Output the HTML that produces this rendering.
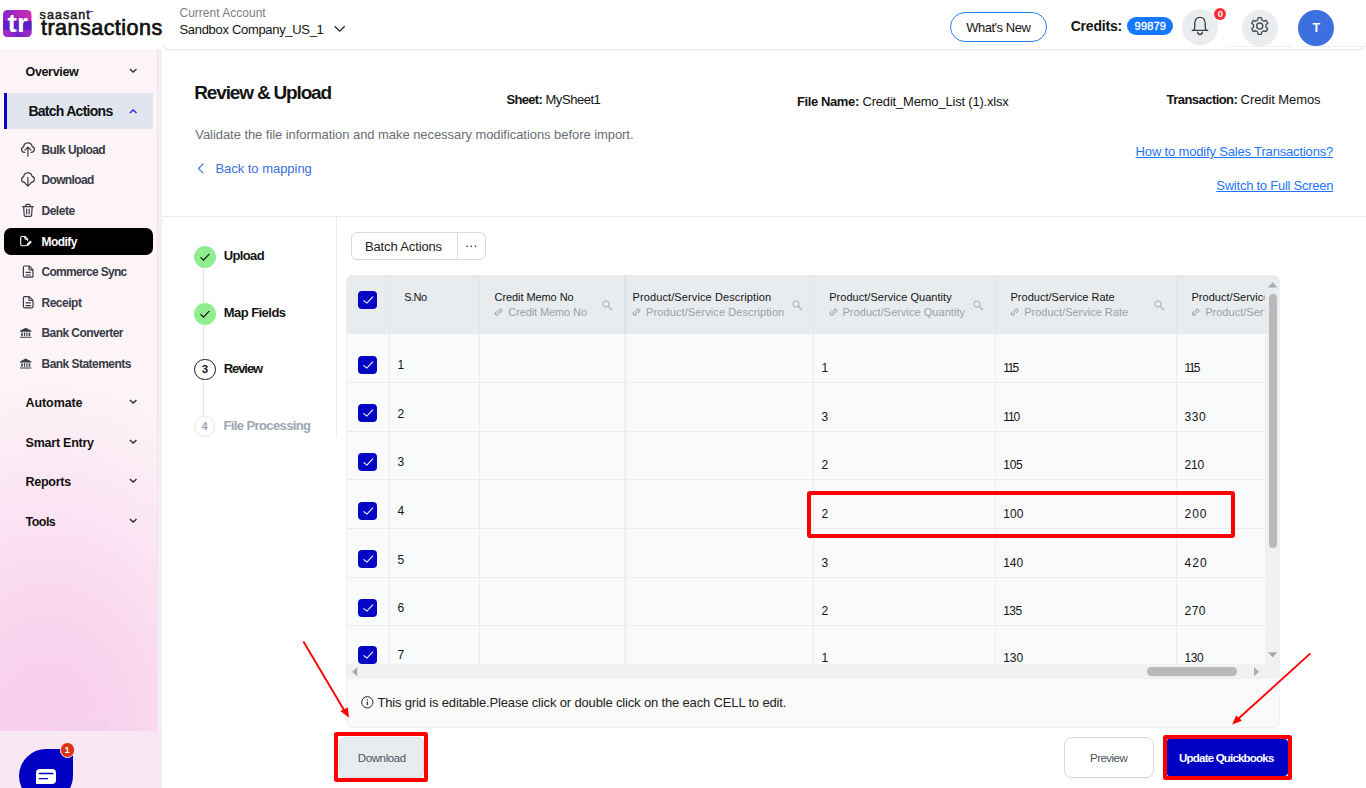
<!DOCTYPE html>
<html lang="en">
<head>
<meta charset="utf-8">
<title>Review &amp; Upload</title>
<style>
*{box-sizing:border-box;margin:0;padding:0}
html,body{width:1366px;height:788px;overflow:hidden;background:#fff;font-family:"Liberation Sans",sans-serif;color:#141414}
.abs{position:absolute}
.t{position:absolute;white-space:nowrap;line-height:1}
#side{position:absolute;left:0;top:49px;width:157px;height:682px;background:radial-gradient(ellipse 170% 51% at 30% 100%,#f9cfec 0%,#f9d3ed 30%,#fbe2f2 60%,#fdf4f7 100%)}
#sidestrip{position:absolute;left:157px;top:49px;width:5px;height:739px;background:#f5eff4;border-left:1px solid #efe4ec}
#sidebot{position:absolute;left:0;top:731px;width:162px;height:57px;background:#f7e8f3}
#hdr{position:absolute;left:162px;top:0;width:1204px;height:50px;background:#fff;border-bottom:1px solid #e3e3e6;border-radius:0 0 8px 8px;box-shadow:0 1px 2px rgba(0,0,0,0.04)}
.cb{position:absolute;width:19px;height:18px;border-radius:4px;background:#0505c5;left:358px}
.cb svg{position:absolute;left:4px;top:4px}
.hline{position:absolute;height:1px;background:#ececef;left:347px;width:918px}
.vline{position:absolute;width:1px;background:#ececef;top:334px;height:330px}
.hv{position:absolute;width:1px;background:#e2e5e9;top:275px;height:59px}
.mag{position:absolute;top:300px}
.mag svg,.lk svg{display:block}
.lk{position:absolute;top:308.300px}
</style>
</head>
<body>
<!-- SIDEBAR -->
<div id="side"></div>
<div id="sidestrip"></div>
<div id="sidebot"></div>
<div id="hdr"></div>

<!-- LOGO -->
<svg class="abs" style="left:3px;top:10px" width="29" height="27" viewBox="0 0 29 27">
 <defs>
  <linearGradient id="lg" x1="0" y1="0" x2="1" y2="0"><stop offset="0" stop-color="#8a25cc"/><stop offset="1" stop-color="#cc2bb0"/></linearGradient>
  <linearGradient id="lg2" x1="0" y1="0" x2="1" y2="0"><stop offset="0" stop-color="#6a1fc9"/><stop offset="1" stop-color="#5320c6"/></linearGradient>
  <linearGradient id="lg3" x1="0" y1="0" x2="1" y2="0"><stop offset="0" stop-color="#b22fc4"/><stop offset="0.5" stop-color="#7a22c8"/><stop offset="1" stop-color="#a02cc8"/></linearGradient>
  <clipPath id="lc"><rect x="0" y="0" width="28.500" height="27" rx="4.500"/></clipPath>
 </defs>
 <g clip-path="url(#lc)">
  <rect x="0" y="0" width="29" height="27" fill="url(#lg)"/>
  <rect x="0" y="11" width="29" height="9" fill="url(#lg2)"/>
  <rect x="0" y="20" width="29" height="7" fill="url(#lg3)"/>
 </g>
 <text x="4.600" y="21.900" font-family="Liberation Sans, sans-serif" font-weight="700" font-size="26" fill="#fff" textLength="20.200" lengthAdjust="spacingAndGlyphs">tr</text>
</svg>
<div class="t" id="saasant" style="left:39.600px;top:8px;line-height:14px;font-size:12.500px;font-weight:400;color:#1a1a1a;letter-spacing:1.050px;-webkit-text-stroke:0.500px #1a1a1a">saasant</div>
<div class="abs" style="left:86.300px;top:11.200px;width:6.700px;height:1.300px;background:linear-gradient(90deg,#c02cc0,#3a35e0)"></div>
<div class="t" id="trans" style="left:41px;top:15.600px;line-height:25px;font-size:21.500px;color:#111;letter-spacing:0.480px;-webkit-text-stroke:0.700px #111">transactions</div>

<!-- HEADER ICONS -->
<svg class="abs" style="left:333px;top:24px" width="13" height="10" viewBox="0 0 13 10"><path d="M1.700 2.200 L6.700 7.200 L11.700 2.200" fill="none" stroke="#222" stroke-width="1.300"/></svg>
<div class="abs" style="left:950px;top:12px;width:97px;height:30px;border:1.300px solid #237dff;border-radius:15px"></div>
<div class="abs" style="left:1127px;top:17px;width:46px;height:17.500px;border-radius:9px;background:#1677ff"></div>
<div class="abs" style="left:1182px;top:9px;width:36px;height:36px;border-radius:18px;background:#eaecee"></div>
<div class="abs" style="left:1242px;top:9.500px;width:36px;height:36px;border-radius:18px;background:#eaecee"></div>
<div class="abs" style="left:1227px;top:46px;width:65px;height:1px;background:#f0f0f0"></div><div class="abs" style="left:1301px;top:46px;width:65px;height:1px;background:#f0f0f0"></div>
<div class="abs" style="left:1298px;top:10px;width:36px;height:36px;border-radius:18px;background:#3c70e0"></div>
<div class="t" style="left:1214.300px;top:8.300px;font-size:9.500px;color:#fff;font-weight:700;background:#ff2d37;border-radius:6px;width:12px;height:12px;text-align:center;line-height:12.500px">0</div>
<!-- bell -->
<!-- gear -->

<!-- NAV SHAPES -->
<div class="abs" style="left:4px;top:93px;width:149px;height:36px;background:#e0e5f0"></div>
<div class="abs" style="left:4px;top:93px;width:3px;height:36px;background:#0a00c8"></div>
<div class="abs" style="left:4px;top:228px;width:149px;height:27px;background:#000;border-radius:7px"></div>
<svg class="abs" style="left:128.500px;top:67.5px" width="8.400" height="5" viewBox="0 0 9.400 5.600"><path d="M1 1 L4.700 4.600 L8.400 1" fill="none" stroke="#333" stroke-width="1.600"/></svg>
<svg class="abs" style="left:128.500px;top:108.6px" width="8.400" height="5" viewBox="0 0 9.400 5.600"><path d="M1 4.600 L4.700 1 L8.400 4.600" fill="none" stroke="#3d2fd6" stroke-width="1.600"/></svg>
<svg class="abs" style="left:128.500px;top:398.90000000000003px" width="8.400" height="5" viewBox="0 0 9.400 5.600"><path d="M1 1 L4.700 4.600 L8.400 1" fill="none" stroke="#333" stroke-width="1.600"/></svg>
<svg class="abs" style="left:128.500px;top:438.7px" width="8.400" height="5" viewBox="0 0 9.400 5.600"><path d="M1 1 L4.700 4.600 L8.400 1" fill="none" stroke="#333" stroke-width="1.600"/></svg>
<svg class="abs" style="left:128.500px;top:477.90000000000003px" width="8.400" height="5" viewBox="0 0 9.400 5.600"><path d="M1 1 L4.700 4.600 L8.400 1" fill="none" stroke="#333" stroke-width="1.600"/></svg>
<svg class="abs" style="left:128.500px;top:517.8px" width="8.400" height="5" viewBox="0 0 9.400 5.600"><path d="M1 1 L4.700 4.600 L8.400 1" fill="none" stroke="#333" stroke-width="1.600"/></svg>

<svg class="abs" style="left:0;top:0" width="160" height="400" viewBox="0 0 160 400"><path d="M24.800 152.300 H24.300 a2.750 2.750 0 0 1 -0.700 -5.400 a4.300 4.300 0 0 1 8.500 -0.600 a3.050 3.050 0 0 1 -0.500 6 H31" fill="none" stroke="#363b46" stroke-width="1.2" stroke-linecap="round" stroke-linejoin="round"/><path d="M27.900 156.200 V147.300 M24.900 150.200 L27.900 147.200 L30.900 150.200" fill="none" stroke="#363b46" stroke-width="1.2" stroke-linecap="round" stroke-linejoin="round"/><path d="M24.800 152.300 H24.300 a2.750 2.750 0 0 1 -0.700 -5.400 a4.300 4.300 0 0 1 8.500 -0.600 a3.050 3.050 0 0 1 -0.500 6 H31" fill="none" stroke="#363b46" stroke-width="1.2" stroke-linecap="round" stroke-linejoin="round" transform="translate(0 30)"/><path d="M27.900 177.300 V186 M24.900 183.100 L27.900 186.100 L30.900 183.100" fill="none" stroke="#363b46" stroke-width="1.2" stroke-linecap="round" stroke-linejoin="round"/><path d="M22.500 206.600 H33.300 M25.700 206.400 V205.300 a0.900 0.900 0 0 1 0.900 -0.900 H29.200 a0.900 0.900 0 0 1 0.900 0.900 V206.400 M23.600 206.800 L24.200 215.200 a1.300 1.300 0 0 0 1.300 1.200 H30.300 a1.300 1.300 0 0 0 1.300 -1.200 L32.200 206.800 M26.600 209.200 V213.800 M29.200 209.200 V213.800" fill="none" stroke="#363b46" stroke-width="1.2" stroke-linecap="round" stroke-linejoin="round"/><path d="M26 245.700 H21.800 a1.100 1.100 0 0 1 -1.100 -1.100 V237.600 a1.100 1.100 0 0 1 1.100 -1.100 H25 L27.600 239.200 V240.600 M24.800 236.700 V238.300 a0.900 0.900 0 0 0 0.900 0.900 H27.400" fill="none" stroke="#fff" stroke-width="1.1" stroke-linecap="round" stroke-linejoin="round"/><path d="M26.300 246.100 L26.700 244.100 L30.300 240.500 L31.900 242.100 L28.300 245.700 Z" fill="#fff"/><path d="M24.600 266 H29.200 L33 269.800 V276 a1.200 1.200 0 0 1 -1.200 1.200 H24.600 a1.200 1.200 0 0 1 -1.200 -1.200 V267.200 a1.200 1.200 0 0 1 1.200 -1.200 Z M26 272.300 H30.500 M26 275 H30.500 M29 266.300 V268.900 a1 1 0 0 0 1 1 H32.700" fill="none" stroke="#363b46" stroke-width="1.2" stroke-linecap="round" stroke-linejoin="round"/><path d="M24.600 266 H29.200 L33 269.800 V276 a1.200 1.200 0 0 1 -1.200 1.200 H24.600 a1.200 1.200 0 0 1 -1.200 -1.200 V267.200 a1.200 1.200 0 0 1 1.200 -1.200 Z M26 272.300 H30.500 M26 275 H30.500 M29 266.300 V268.900 a1 1 0 0 0 1 1 H32.700" fill="none" stroke="#363b46" stroke-width="1.2" stroke-linecap="round" stroke-linejoin="round" transform="translate(0 30.600)"/><path d="M25.700 327.700 L31.400 330.800 V331.700 H20 V330.800 Z M21.200 332.500 H22.700 V335.900 H21.200 Z M23.900 332.500 H25.100 V335.900 H23.900 Z M26.300 332.500 H27.500 V335.900 H26.300 Z M28.700 332.500 H30.200 V335.900 H28.700 Z M20 336.700 H31.400 V337.700 H20 Z" fill="#363b46"/><path d="M25.700 327.700 L31.400 330.800 V331.700 H20 V330.800 Z M21.200 332.500 H22.700 V335.900 H21.200 Z M23.900 332.500 H25.100 V335.900 H23.900 Z M26.300 332.500 H27.500 V335.900 H26.300 Z M28.700 332.500 H30.200 V335.900 H28.700 Z M20 336.700 H31.400 V337.700 H20 Z" fill="#363b46" transform="translate(0 30.800)"/></svg>


<!-- MAIN LINES -->
<svg class="abs" style="left:197px;top:163px" width="8" height="11" viewBox="0 0 8 11"><path d="M6.300 0.700 L1.500 5.500 L6.300 10.300" fill="none" stroke="#3b6fd9" stroke-width="1.100"/></svg>
<div class="abs" style="left:162px;top:216px;width:1204px;height:1px;background:#ececf0"></div>
<div class="abs" style="left:336px;top:216px;width:1px;height:222px;background:#ececf0"></div>

<!-- STEPS -->
<div class="abs" style="left:203px;top:266px;width:1px;height:150px;background:#e3e5ea"></div>
<div class="abs" style="left:194px;top:246px;width:22px;height:22px;border-radius:11px;background:#90ee90"></div>
<div class="abs" style="left:194px;top:303px;width:22px;height:22px;border-radius:11px;background:#90ee90"></div>
<svg class="abs" style="left:199px;top:252px" width="12" height="10" viewBox="0 0 12 10"><path d="M1.600 5.300 L4.500 8.100 L10.400 1.900" fill="none" stroke="#141414" stroke-width="1.200"/></svg>
<svg class="abs" style="left:199px;top:309px" width="12" height="10" viewBox="0 0 12 10"><path d="M1.600 5.300 L4.500 8.100 L10.400 1.900" fill="none" stroke="#141414" stroke-width="1.200"/></svg>
<div class="abs" style="left:194px;top:358.500px;width:21.500px;height:21.500px;border-radius:11px;background:#fff;border:1px solid #141414"></div>
<div class="abs" style="left:194px;top:416px;width:21px;height:21px;border-radius:11px;background:#fff;border:1px solid #e4e7ee"></div>

<!-- BATCH BTN -->
<div class="abs" style="left:351px;top:232px;width:135px;height:28px;border:1px solid #d9d9d9;border-radius:6px;background:#fff"></div>
<div class="abs" style="left:457px;top:232px;width:1px;height:28px;background:#d9d9d9"></div>
<svg class="abs" style="left:465px;top:244px" width="13" height="5" viewBox="0 0 13 5"><circle cx="2.100" cy="2.300" r="0.800" fill="#222"/><circle cx="6.300" cy="2.300" r="0.800" fill="#222"/><circle cx="10.500" cy="2.300" r="0.800" fill="#222"/></svg>

<!-- GRID -->
<div class="abs" style="left:346.500px;top:275px;width:932px;height:452px;background:#fafafa;border-radius:6px;box-shadow:0 1px 0 0 #efefef,1px 0 0 0 #f0f0f0,-1px 0 0 0 #f0f0f0"></div>
<div class="abs" style="left:347px;top:275px;width:932px;height:59px;background:#e9ecef;border-radius:6px 6px 0 0"></div>
<div class="abs" style="left:347px;top:334px;width:918px;height:330px;background:#f9fafb"></div>
<div class="abs" style="left:1265px;top:334px;width:14px;height:330px;background:#f1f1f1"></div>
<div class="abs" style="left:347px;top:664px;width:932px;height:14.500px;background:#f1f1f1"></div>
<div class="abs" style="left:1268.500px;top:293.500px;width:8.500px;height:254px;background:#b9b9b9;border-radius:4.500px"></div>
<svg class="abs" style="left:1268px;top:281.500px" width="10" height="6" viewBox="0 0 10 6"><path d="M0 5.500 L4.700 0.300 L9.400 5.500Z" fill="#a9a9a9"/></svg>
<svg class="abs" style="left:1268px;top:651.500px" width="10" height="6" viewBox="0 0 10 6"><path d="M0 0.300 L4.600 5.500 L9.200 0.300Z" fill="#a9a9a9"/></svg>
<div class="vline" style="left:389px"></div><div class="hv" style="left:389px"></div>
<div class="vline" style="left:479px"></div><div class="hv" style="left:479px"></div>
<div class="vline" style="left:813px"></div><div class="hv" style="left:813px"></div>
<div class="vline" style="left:995px"></div><div class="hv" style="left:995px"></div>
<div class="vline" style="left:1176px"></div><div class="hv" style="left:1176px"></div>
<div class="abs" style="left:624px;top:275px;width:5px;height:389px;background:linear-gradient(90deg,rgba(0,0,0,0.075),rgba(0,0,0,0.02) 35%,rgba(0,0,0,0))"></div>
<div class="hline" style="top:382px"></div>
<div class="hline" style="top:431px"></div>
<div class="hline" style="top:479px"></div>
<div class="hline" style="top:528px"></div>
<div class="hline" style="top:577px"></div>
<div class="hline" style="top:625px"></div>

<div class="cb" style="top:291px"><svg width="13" height="10" viewBox="0 0 13 10"><path d="M1.500 5.300 L4.900 8.100 L11 1.700" fill="none" stroke="#fff" stroke-width="1.100"/></svg></div>
<div class="cb" style="top:356px"><svg width="13" height="10" viewBox="0 0 13 10"><path d="M1.500 5.300 L4.900 8.100 L11 1.700" fill="none" stroke="#fff" stroke-width="1.100"/></svg></div>
<div class="cb" style="top:404px"><svg width="13" height="10" viewBox="0 0 13 10"><path d="M1.500 5.300 L4.900 8.100 L11 1.700" fill="none" stroke="#fff" stroke-width="1.100"/></svg></div>
<div class="cb" style="top:453.3px"><svg width="13" height="10" viewBox="0 0 13 10"><path d="M1.500 5.300 L4.900 8.100 L11 1.700" fill="none" stroke="#fff" stroke-width="1.100"/></svg></div>
<div class="cb" style="top:502px"><svg width="13" height="10" viewBox="0 0 13 10"><path d="M1.500 5.300 L4.900 8.100 L11 1.700" fill="none" stroke="#fff" stroke-width="1.100"/></svg></div>
<div class="cb" style="top:550.3px"><svg width="13" height="10" viewBox="0 0 13 10"><path d="M1.500 5.300 L4.900 8.100 L11 1.700" fill="none" stroke="#fff" stroke-width="1.100"/></svg></div>
<div class="cb" style="top:598.7px"><svg width="13" height="10" viewBox="0 0 13 10"><path d="M1.500 5.300 L4.900 8.100 L11 1.700" fill="none" stroke="#fff" stroke-width="1.100"/></svg></div>
<div class="cb" style="top:646px;height:18px"><svg width="13" height="10" viewBox="0 0 13 10"><path d="M1.500 5.300 L4.900 8.100 L11 1.700" fill="none" stroke="#fff" stroke-width="1.100"/></svg></div>

<div class="lk" style="left:494.3px"><svg width="9" height="8.400" viewBox="0 0 9 8.400"><path d="M3.500 5.200 L5.500 3.200 M4.200 2.500 L5.200 1.500 a1.600 1.600 0 0 1 2.250 2.250 L6.500 4.700 M4.800 5.900 L3.800 6.900 a1.600 1.600 0 0 1 -2.250 -2.250 L2.500 3.700" fill="none" stroke="#7f858d" stroke-width="0.950" stroke-linecap="round"/></svg></div><div class="mag" style="left:602.3px"><svg width="11" height="11" viewBox="0 0 11 11"><circle cx="4" cy="4" r="3.100" fill="none" stroke="#a8acb2" stroke-width="1"/><path d="M6.300 6.300 L10 10" stroke="#a8acb2" stroke-width="1.100"/></svg></div>
<div class="lk" style="left:632.3px"><svg width="9" height="8.400" viewBox="0 0 9 8.400"><path d="M3.500 5.200 L5.500 3.200 M4.200 2.500 L5.200 1.500 a1.600 1.600 0 0 1 2.250 2.250 L6.500 4.700 M4.800 5.900 L3.800 6.900 a1.600 1.600 0 0 1 -2.250 -2.250 L2.500 3.700" fill="none" stroke="#7f858d" stroke-width="0.950" stroke-linecap="round"/></svg></div><div class="mag" style="left:792.3px"><svg width="11" height="11" viewBox="0 0 11 11"><circle cx="4" cy="4" r="3.100" fill="none" stroke="#a8acb2" stroke-width="1"/><path d="M6.300 6.300 L10 10" stroke="#a8acb2" stroke-width="1.100"/></svg></div>
<div class="lk" style="left:829px"><svg width="9" height="8.400" viewBox="0 0 9 8.400"><path d="M3.500 5.200 L5.500 3.200 M4.200 2.500 L5.200 1.500 a1.600 1.600 0 0 1 2.250 2.250 L6.500 4.700 M4.800 5.900 L3.800 6.900 a1.600 1.600 0 0 1 -2.250 -2.250 L2.500 3.700" fill="none" stroke="#7f858d" stroke-width="0.950" stroke-linecap="round"/></svg></div><div class="mag" style="left:973.2px"><svg width="11" height="11" viewBox="0 0 11 11"><circle cx="4" cy="4" r="3.100" fill="none" stroke="#a8acb2" stroke-width="1"/><path d="M6.300 6.300 L10 10" stroke="#a8acb2" stroke-width="1.100"/></svg></div>
<div class="lk" style="left:1010.3px"><svg width="9" height="8.400" viewBox="0 0 9 8.400"><path d="M3.500 5.200 L5.500 3.200 M4.200 2.500 L5.200 1.500 a1.600 1.600 0 0 1 2.250 2.250 L6.500 4.700 M4.800 5.900 L3.800 6.900 a1.600 1.600 0 0 1 -2.250 -2.250 L2.500 3.700" fill="none" stroke="#7f858d" stroke-width="0.950" stroke-linecap="round"/></svg></div><div class="mag" style="left:1154.3px"><svg width="11" height="11" viewBox="0 0 11 11"><circle cx="4" cy="4" r="3.100" fill="none" stroke="#a8acb2" stroke-width="1"/><path d="M6.300 6.300 L10 10" stroke="#a8acb2" stroke-width="1.100"/></svg></div>
<div class="lk" style="left:1191.300px"><svg width="9" height="8.400" viewBox="0 0 9 8.400"><path d="M3.500 5.200 L5.500 3.200 M4.200 2.500 L5.200 1.500 a1.600 1.600 0 0 1 2.250 2.250 L6.500 4.700 M4.800 5.900 L3.800 6.900 a1.600 1.600 0 0 1 -2.250 -2.250 L2.500 3.700" fill="none" stroke="#7f858d" stroke-width="0.950" stroke-linecap="round"/></svg></div>


<div class="abs" style="left:338.500px;top:736.500px;width:85.500px;height:41px;background:#e9ecef;border-radius:6px;border:1px solid #dde0e4"></div>
<div class="abs" style="left:1064px;top:737px;width:90px;height:41px;background:#fff;border-radius:8px;border:1px solid #d9d9d9;box-shadow:0 1px 2px rgba(0,0,0,0.04)"></div>
<div class="abs" style="left:1167px;top:738.700px;width:121.400px;height:37.600px;background:#0000c4;border-radius:2px 4px 4px 2px"></div>

<div class="t" style="left:179.50px;top:6px;line-height:14px;font-size:12px;font-weight:400;color:#7d7d7d;letter-spacing:0.009px;">Current Account</div>
<div class="t" style="left:179.50px;top:22px;line-height:15px;font-size:13px;font-weight:400;color:#141414;letter-spacing:-0.315px;">Sandbox Company_US_1</div>
<div class="t" style="left:966.20px;top:20px;line-height:15px;font-size:13px;font-weight:400;color:#141414;letter-spacing:-0.484px;">What's New</div>
<div class="t" style="left:1070.70px;top:18px;line-height:16px;font-size:14px;font-weight:700;color:#141414;letter-spacing:-0.205px;">Credits:</div>
<div class="t" style="left:1134.60px;top:20px;line-height:12px;font-size:11px;font-weight:400;color:#fff;letter-spacing:0.182px;-webkit-text-stroke:0.350px #fff">99879</div>
<div class="t" style="left:1312.50px;top:21px;line-height:14px;font-size:12.5px;font-weight:700;color:#fff;letter-spacing:0.000px;">T</div>
<div class="t" style="left:25.50px;top:65px;line-height:14px;font-size:12.5px;font-weight:700;color:#111;letter-spacing:-0.338px;">Overview</div>
<div class="t" style="left:28.40px;top:103px;line-height:16px;font-size:14px;font-weight:700;color:#111;letter-spacing:-0.736px;">Batch Actions</div>
<div class="t" style="left:41.50px;top:143px;line-height:14px;font-size:12px;font-weight:700;color:#363b46;letter-spacing:-0.587px;">Bulk Upload</div>
<div class="t" style="left:41.50px;top:173px;line-height:14px;font-size:12px;font-weight:700;color:#363b46;letter-spacing:-0.657px;">Download</div>
<div class="t" style="left:41.50px;top:204px;line-height:14px;font-size:12px;font-weight:700;color:#363b46;letter-spacing:-0.489px;">Delete</div>
<div class="t" style="left:41.50px;top:235px;line-height:14px;font-size:12px;font-weight:700;color:#fff;letter-spacing:-0.537px;">Modify</div>
<div class="t" style="left:41.50px;top:265px;line-height:14px;font-size:12px;font-weight:700;color:#363b46;letter-spacing:-0.689px;">Commerce Sync</div>
<div class="t" style="left:41.50px;top:296px;line-height:14px;font-size:12px;font-weight:700;color:#363b46;letter-spacing:-0.492px;">Receipt</div>
<div class="t" style="left:41.50px;top:326px;line-height:14px;font-size:12px;font-weight:700;color:#363b46;letter-spacing:-0.569px;">Bank Converter</div>
<div class="t" style="left:41.50px;top:357px;line-height:14px;font-size:12px;font-weight:700;color:#363b46;letter-spacing:-0.535px;">Bank Statements</div>
<div class="t" style="left:25.60px;top:396px;line-height:14px;font-size:12.5px;font-weight:700;color:#111;letter-spacing:-0.099px;">Automate</div>
<div class="t" style="left:25.60px;top:436px;line-height:14px;font-size:12.5px;font-weight:700;color:#111;letter-spacing:-0.240px;">Smart Entry</div>
<div class="t" style="left:25.60px;top:475px;line-height:14px;font-size:12.5px;font-weight:700;color:#111;letter-spacing:-0.280px;">Reports</div>
<div class="t" style="left:25.60px;top:515px;line-height:14px;font-size:12.5px;font-weight:700;color:#111;letter-spacing:-0.563px;">Tools</div>
<div class="t" style="left:194.30px;top:82px;line-height:21px;font-size:19px;font-weight:700;color:#141414;letter-spacing:-1.167px;">Review &amp; Upload</div>
<div class="t" style="left:506.40px;top:92px;line-height:15px;font-size:13px;font-weight:700;color:#141414;letter-spacing:-0.660px;">Sheet:</div>
<div class="t" style="left:545.50px;top:92px;line-height:15px;font-size:13px;font-weight:400;color:#141414;letter-spacing:-0.457px;">MySheet1</div>
<div class="t" style="left:796.90px;top:94px;line-height:15px;font-size:13px;font-weight:700;color:#141414;letter-spacing:-0.379px;">File Name:</div>
<div class="t" style="left:862.50px;top:94px;line-height:15px;font-size:13px;font-weight:400;color:#141414;letter-spacing:-0.195px;">Credit_Memo_List (1).xlsx</div>
<div class="t" style="left:1166.60px;top:92px;line-height:15px;font-size:13px;font-weight:700;color:#141414;letter-spacing:-0.551px;">Transaction:</div>
<div class="t" style="left:1240.60px;top:92px;line-height:15px;font-size:13px;font-weight:400;color:#141414;letter-spacing:-0.082px;">Credit Memos</div>
<div class="t" style="left:195.30px;top:127px;line-height:15px;font-size:13px;font-weight:400;color:#6a6e76;letter-spacing:-0.059px;">Validate the file information and make necessary modifications before import.</div>
<div class="t" style="left:215.40px;top:161px;line-height:15px;font-size:13px;font-weight:400;color:#3b6fd9;letter-spacing:-0.029px;">Back to mapping</div>
<div class="t" style="left:1135.60px;top:144px;line-height:15px;font-size:13px;font-weight:400;color:#1f75fe;letter-spacing:-0.167px;text-decoration:underline;text-underline-offset:1px">How to modify Sales Transactions?</div>
<div class="t" style="left:1216.30px;top:178px;line-height:15px;font-size:13px;font-weight:400;color:#1f75fe;letter-spacing:-0.244px;text-decoration:underline;text-underline-offset:1px">Switch to Full Screen</div>
<div class="t" style="left:223.70px;top:248px;line-height:15px;font-size:13px;font-weight:700;color:#141414;letter-spacing:-0.622px;">Upload</div>
<div class="t" style="left:223.70px;top:305px;line-height:15px;font-size:13px;font-weight:700;color:#141414;letter-spacing:-0.539px;">Map Fields</div>
<div class="t" style="left:223.70px;top:361px;line-height:15px;font-size:13px;font-weight:700;color:#141414;letter-spacing:-1.058px;">Review</div>
<div class="t" style="left:223.50px;top:418px;line-height:15px;font-size:13px;font-weight:700;color:#9ca6b5;letter-spacing:-0.611px;">File Processing</div>
<div class="t" style="left:201.80px;top:363px;line-height:12px;font-size:11.5px;font-weight:700;color:#141414;letter-spacing:0.000px;">3</div>
<div class="t" style="left:201.60px;top:420px;line-height:12px;font-size:11px;font-weight:700;color:#9ca6b5;letter-spacing:0.000px;">4</div>
<div class="t" style="left:365.00px;top:239px;line-height:15px;font-size:13px;font-weight:400;color:#222;letter-spacing:-0.140px;">Batch Actions</div>
<div class="t" style="left:404.20px;top:291px;line-height:12px;font-size:11px;font-weight:400;color:#141414;letter-spacing:-0.546px;">S.No</div>
<div class="t" style="left:494.60px;top:291px;line-height:12px;font-size:11px;font-weight:400;color:#141414;letter-spacing:-0.082px;">Credit Memo No</div>
<div class="t" style="left:508.30px;top:306px;line-height:12px;font-size:11px;font-weight:400;color:#9a9fa6;letter-spacing:-0.105px;">Credit Memo No</div>
<div class="t" style="left:632.50px;top:291px;line-height:12px;font-size:11px;font-weight:400;color:#141414;letter-spacing:0.111px;">Product/Service Description</div>
<div class="t" style="left:646.10px;top:306px;line-height:12px;font-size:11px;font-weight:400;color:#9a9fa6;letter-spacing:0.092px;">Product/Service Description</div>
<div class="t" style="left:829.20px;top:291px;line-height:12px;font-size:11px;font-weight:400;color:#141414;letter-spacing:0.036px;">Product/Service Quantity</div>
<div class="t" style="left:842.50px;top:306px;line-height:12px;font-size:11px;font-weight:400;color:#9a9fa6;letter-spacing:0.036px;">Product/Service Quantity</div>
<div class="t" style="left:1010.50px;top:291px;line-height:12px;font-size:11px;font-weight:400;color:#141414;letter-spacing:0.015px;">Product/Service Rate</div>
<div class="t" style="left:1024.20px;top:306px;line-height:12px;font-size:11px;font-weight:400;color:#9a9fa6;letter-spacing:-0.001px;">Product/Service Rate</div>
<div class="t" style="left:1191.50px;top:291px;line-height:12px;font-size:11px;font-weight:400;color:#141414;letter-spacing:0.021px;clip-path:inset(0 45.58px 0 0);">Product/Service Amount</div>
<div class="t" style="left:1205.20px;top:306px;line-height:12px;font-size:11px;font-weight:400;color:#9a9fa6;letter-spacing:0.021px;clip-path:inset(0 59.28px 0 0);">Product/Service Amount</div>
<div class="t" style="left:397.40px;top:358px;line-height:14px;font-size:12px;font-weight:400;color:#141414;letter-spacing:0.000px;">1</div>
<div class="t" style="left:397.40px;top:407px;line-height:14px;font-size:12px;font-weight:400;color:#141414;letter-spacing:0.000px;">2</div>
<div class="t" style="left:397.40px;top:455px;line-height:14px;font-size:12px;font-weight:400;color:#141414;letter-spacing:0.000px;">3</div>
<div class="t" style="left:397.40px;top:504px;line-height:14px;font-size:12px;font-weight:400;color:#141414;letter-spacing:0.000px;">4</div>
<div class="t" style="left:397.40px;top:553px;line-height:14px;font-size:12px;font-weight:400;color:#141414;letter-spacing:0.000px;">5</div>
<div class="t" style="left:397.40px;top:601px;line-height:14px;font-size:12px;font-weight:400;color:#141414;letter-spacing:0.000px;">6</div>
<div class="t" style="left:397.40px;top:648px;line-height:14px;font-size:12px;font-weight:400;color:#141414;letter-spacing:0.000px;">7</div>
<div class="t" style="left:821.50px;top:361px;line-height:14px;font-size:12px;font-weight:400;color:#141414;letter-spacing:0.000px;">1</div>
<div class="t" style="left:1003.20px;top:361px;line-height:14px;font-size:12px;font-weight:400;color:#141414;letter-spacing:-1.579px;">115</div>
<div class="t" style="left:1184.60px;top:361px;line-height:14px;font-size:12px;font-weight:400;color:#141414;letter-spacing:-1.679px;">115</div>
<div class="t" style="left:821.50px;top:410px;line-height:14px;font-size:12px;font-weight:400;color:#141414;letter-spacing:0.000px;">3</div>
<div class="t" style="left:1003.20px;top:410px;line-height:14px;font-size:12px;font-weight:400;color:#141414;letter-spacing:-1.029px;">110</div>
<div class="t" style="left:1184.60px;top:410px;line-height:14px;font-size:12px;font-weight:400;color:#141414;letter-spacing:0.526px;">330</div>
<div class="t" style="left:821.50px;top:458px;line-height:14px;font-size:12px;font-weight:400;color:#141414;letter-spacing:0.000px;">2</div>
<div class="t" style="left:1003.20px;top:458px;line-height:14px;font-size:12px;font-weight:400;color:#141414;letter-spacing:-0.224px;">105</div>
<div class="t" style="left:1184.60px;top:458px;line-height:14px;font-size:12px;font-weight:400;color:#141414;letter-spacing:-0.224px;">210</div>
<div class="t" style="left:821.50px;top:507px;line-height:14px;font-size:12px;font-weight:400;color:#141414;letter-spacing:0.000px;">2</div>
<div class="t" style="left:1003.20px;top:507px;line-height:14px;font-size:12px;font-weight:400;color:#141414;letter-spacing:0.126px;">100</div>
<div class="t" style="left:1184.60px;top:507px;line-height:14px;font-size:12px;font-weight:400;color:#141414;letter-spacing:0.926px;">200</div>
<div class="t" style="left:821.50px;top:556px;line-height:14px;font-size:12px;font-weight:400;color:#141414;letter-spacing:0.000px;">3</div>
<div class="t" style="left:1003.20px;top:556px;line-height:14px;font-size:12px;font-weight:400;color:#141414;letter-spacing:-0.074px;">140</div>
<div class="t" style="left:1184.60px;top:556px;line-height:14px;font-size:12px;font-weight:400;color:#141414;letter-spacing:1.026px;">420</div>
<div class="t" style="left:821.50px;top:604px;line-height:14px;font-size:12px;font-weight:400;color:#141414;letter-spacing:0.000px;">2</div>
<div class="t" style="left:1003.20px;top:604px;line-height:14px;font-size:12px;font-weight:400;color:#141414;letter-spacing:-0.524px;">135</div>
<div class="t" style="left:1184.60px;top:604px;line-height:14px;font-size:12px;font-weight:400;color:#141414;letter-spacing:0.376px;">270</div>
<div class="t" style="left:821.50px;top:651px;line-height:14px;font-size:12px;font-weight:400;color:#141414;letter-spacing:0.000px;">1</div>
<div class="t" style="left:1003.20px;top:651px;line-height:14px;font-size:12px;font-weight:400;color:#141414;letter-spacing:-0.074px;">130</div>
<div class="t" style="left:1184.60px;top:651px;line-height:14px;font-size:12px;font-weight:400;color:#141414;letter-spacing:-0.474px;">130</div>
<div class="t" style="left:377.40px;top:695px;line-height:15px;font-size:13px;font-weight:400;color:#222;letter-spacing:-0.158px;">This grid is editable.Please click or double click on the each CELL to edit.</div>
<div class="t" style="left:357.80px;top:752px;line-height:12px;font-size:11.5px;font-weight:400;color:#4b5563;letter-spacing:-0.393px;">Download</div>
<div class="t" style="left:1090.00px;top:752px;line-height:12px;font-size:11.5px;font-weight:400;color:#4b5563;letter-spacing:-0.516px;">Preview</div>
<div class="t" style="left:1179.10px;top:752px;line-height:12px;font-size:11.5px;font-weight:700;color:#fff;letter-spacing:-0.800px;">Update Quickbooks</div>

<!-- bottom scrollbar over last row -->
<div class="abs" style="left:347px;top:664px;width:919px;height:14.500px;background:#f1f1f1"></div>
<div class="abs" style="left:1147px;top:667.300px;width:90px;height:8.500px;background:#b9b9b9;border-radius:4.500px"></div>
<svg class="abs" style="left:352px;top:667px" width="6" height="10" viewBox="0 0 6 10"><path d="M5.200 0.300 L0.200 4.800 L5.200 9.300Z" fill="#a9a9a9"/></svg>
<svg class="abs" style="left:1254px;top:667px" width="6" height="10" viewBox="0 0 6 10"><path d="M0 0.300 L5 4.800 L0 9.300Z" fill="#a9a9a9"/></svg>
<!-- info icon -->
<svg class="abs" style="left:361px;top:696px" width="13" height="13" viewBox="0 0 13 13"><circle cx="6.300" cy="6.300" r="5.650" fill="none" stroke="#222" stroke-width="1"/><path d="M6.300 5.600 V9.300 M6.300 3.300 V4.400" stroke="#222" stroke-width="1.100"/></svg>


<!-- ANNOTATIONS -->
<div class="abs" style="left:807.200px;top:491px;width:428px;height:47px;border:4.200px solid #f00;border-radius:3px"></div>
<div class="abs" style="left:334px;top:732px;width:94px;height:50px;border:4px solid #f00;border-radius:2.500px"></div>
<div class="abs" style="left:1163px;top:735px;width:129px;height:45px;border:4px solid #f00;border-radius:2.500px"></div>
<svg class="abs" style="left:0;top:0;pointer-events:none" width="1366" height="788" viewBox="0 0 1366 788">
 <path d="M1192.300 30.400 H1207.700 M1193.700 30.400 C1195.300 28.600 1194.700 26 1194.800 23.300 C1195 19.500 1197.200 17.400 1200 17.400 C1202.800 17.400 1205 19.500 1205.200 23.300 C1205.300 26 1204.700 28.600 1206.300 30.400 M1197.600 32.100 C1197.600 35.300 1202.400 35.300 1202.400 32.100" fill="none" stroke="#3d4248" stroke-width="1.350" stroke-linecap="round" stroke-linejoin="round"/>
 <path d="M1257.70 20.04 L1258.13 17.66 L1261.37 17.66 L1261.80 20.04 L1263.88 21.25 L1266.17 20.42 L1267.79 23.23 L1265.93 24.80 L1265.93 27.20 L1267.79 28.77 L1266.17 31.58 L1263.88 30.75 L1261.80 31.96 L1261.37 34.34 L1258.13 34.34 L1257.70 31.96 L1255.62 30.75 L1253.33 31.58 L1251.71 28.77 L1253.57 27.20 L1253.57 24.80 L1251.71 23.23 L1253.33 20.42 L1255.62 21.25Z" fill="none" stroke="#474c52" stroke-width="1.350" stroke-linejoin="round"/><circle cx="1259.75" cy="26.0" r="3.050" fill="none" stroke="#474c52" stroke-width="1.350"/>
 <path d="M303.400 641.500 L345.500 712.500" stroke="#f00" stroke-width="1.900" fill="none"/>
 <path d="M349 717.700 L340.300 711.100 L347.900 707.400 Z" fill="#f00"/>
 <path d="M1310.400 653.400 L1238 719" stroke="#f00" stroke-width="1.900" fill="none"/>
 <path d="M1232.100 724.400 L1236.200 715.400 L1242 720.800 Z" fill="#f00"/>
</svg>

<!-- CHAT -->
<div class="abs" style="left:58px;top:719px;width:50px;height:12px;background:rgba(228,210,242,0.300)"></div>
<div class="abs" style="left:19px;top:749px;width:54.300px;height:54.300px;background:#0000c4;border-radius:27px 5px 27px 27px"></div>
<svg class="abs" style="left:36px;top:769px" width="20" height="16" viewBox="0 0 20 16"><path d="M4 0 H16 a4 4 0 0 1 4 4 V11 a4 4 0 0 1 -4 4 H0 V4 a4 4 0 0 1 4 -4Z" fill="#fff"/><path d="M2.800 4.500 H17.300 M2.800 9.700 H11.900" stroke="#0000c4" stroke-width="1.300"/></svg>
<div class="abs" style="left:59.500px;top:742.200px;width:15.400px;height:15.400px;border-radius:8px;background:#de3210;border:1px solid #fdf1f6"></div>
<div class="t" style="left:64.600px;top:745px;font-size:9.500px;line-height:10px;font-weight:700;color:#fff">1</div>
</body>
</html>
